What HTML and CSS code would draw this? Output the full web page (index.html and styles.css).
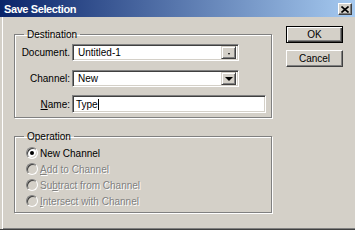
FILE: index.html
```html
<!DOCTYPE html>
<html lang="en">
<head>
    <meta charset="UTF-8">
    <title>Save Selection</title>
    <link rel="stylesheet" href="styles.css">
</head>
<body>
    <div class="window">
        <div class="titlebar">
            <span class="title">Save Selection</span>
            <button class="close">
                <svg width="8" height="7" viewBox="0 0 8 7"><path d="M0.5 0.5 L7.5 6.5 M7.5 0.5 L0.5 6.5" stroke="#000" stroke-width="1.6"/></svg>
            </button>
        </div>

        <div class="dialog">
            <div class="groups">
                <!-- Destination -->
                <fieldset class="group dest">
                    <legend>Destination</legend>
                    <div class="row">
                        <label>Document.</label>
                        <div class="select doc">
                            <span class="value">Untitled-1</span>
                            <span class="arrow tiny"></span>
                        </div>
                    </div>
                    <div class="row">
                        <label>Channel:</label>
                        <div class="select">
                            <span class="value">New</span>
                            <span class="arrow"></span>
                        </div>
                    </div>
                    <div class="row">
                        <label><u>N</u>ame:</label>
                        <div class="textbox"><span class="value">Type</span><span class="caret"></span></div>
                    </div>
                </fieldset>

                <!-- Operation -->
                <fieldset class="group op">
                    <legend>Operation</legend>
                    <div class="radio-row">
                        <span class="radio checked"></span>
                        <span class="radio-label">New Channel</span>
                    </div>
                    <div class="radio-row disabled">
                        <span class="radio"></span>
                        <span class="radio-label"><u>A</u>dd to Channel</span>
                    </div>
                    <div class="radio-row disabled">
                        <span class="radio"></span>
                        <span class="radio-label">Su<u>b</u>tract from Channel</span>
                    </div>
                    <div class="radio-row disabled">
                        <span class="radio"></span>
                        <span class="radio-label"><u>I</u>ntersect with Channel</span>
                    </div>
                </fieldset>
            </div>

            <div class="buttons">
                <button class="btn default">OK</button>
                <button class="btn">Cancel</button>
            </div>
        </div>
    </div>
</body>
</html>
```

FILE: styles.css
```css
body {
    margin: 0;
    background-color: #d4d0c8;
    font-family: "Liberation Sans", Arial, sans-serif;
    font-size: 10px;
    color: #000;
}
.window {
    width: 355px;
    height: 230px;
    box-sizing: border-box;
    background-color: #d4d0c8;
    border-bottom: 1px solid #404040;
    box-shadow: inset 0 -1px 0 #808080;
    overflow: hidden;
}
.titlebar {
    height: 17px;
    display: flex;
    align-items: center;
    justify-content: space-between;
    padding: 0 3px 0 4px;
    background: linear-gradient(to right, #0a246a, #a6caf0);
}
.title {
    color: #fff;
    font-weight: bold;
    font-size: 11px;
    letter-spacing: -0.4px;
}
.close {
    width: 14px;
    height: 12px;
    padding: 0;
    margin-top: 1px;
    display: flex;
    align-items: center;
    justify-content: center;
    background-color: #d4d0c8;
    border: 1px solid;
    border-color: #fff #404040 #404040 #fff;
    box-shadow: inset -1px -1px 0 #808080;
}
.dialog {
    display: flex;
    gap: 14px;
    height: 212px;
    padding-left: 14px;
    box-shadow: inset 2px 0 0 #d4d0c8, inset 3px 0 0 #fff;
}
.groups {
    width: 258px;
    padding-top: 11px;
}
.group {
    margin: 0;
    padding: 0;
    border: 1px solid #808080;
    box-shadow: 1px 1px 0 #fff, inset 1px 1px 0 #fff;
}
.group legend {
    margin-left: 9px;
    padding: 0 3px;
    line-height: 13px;
}
.dest {
    padding: 3px 0 4px 0;
}
.op {
    margin-top: 12px;
    padding: 2px 0 3px 0;
}
.row {
    display: flex;
    align-items: center;
    margin-top: 9px;
}
.row:first-of-type {
    margin-top: 0;
}
.row:last-child {
    margin-top: 8px;
}
.row label {
    width: 55px;
    margin-right: 2px;
    text-align: right;
}
.select,
.textbox {
    display: flex;
    align-items: center;
    box-sizing: border-box;
    background-color: #fff;
    border: 1px solid;
    border-color: #808080 #fff #fff #808080;
    box-shadow: inset 1px 1px 0 #404040, inset -1px -1px 0 #d4d0c8;
}
.select {
    width: 167px;
    height: 17px;
    padding: 2px 2px 2px 5px;
}
.select .value {
    flex: 1;
}
.textbox {
    width: 194px;
    height: 18px;
    padding: 0 2px 0 3px;
}
.caret {
    width: 1px;
    height: 11px;
    background-color: #000;
}
.arrow {
    width: 15px;
    height: 13px;
    box-sizing: border-box;
    display: flex;
    align-items: center;
    justify-content: center;
    background-color: #d4d0c8;
    border: 1px solid;
    border-color: #d4d0c8 #404040 #404040 #d4d0c8;
    box-shadow: inset 1px 1px 0 #fff, inset -1px -1px 0 #808080;
}
.arrow::after {
    content: "";
    border-left: 4px solid transparent;
    border-right: 4px solid transparent;
    border-top: 4px solid #000;
}
.arrow.tiny::after {
    border-left-width: 1px;
    border-right-width: 1px;
    border-top-width: 2px;
    margin-top: 3px;
}
.radio-row {
    display: flex;
    align-items: center;
    height: 16px;
    padding-left: 11px;
}
.radio {
    width: 12px;
    height: 12px;
    box-sizing: border-box;
    border-radius: 50%;
    display: flex;
    align-items: center;
    justify-content: center;
    background-color: #fff;
    border: 1px solid;
    border-color: #808080 #fff #fff #808080;
    box-shadow: inset 1px 1px 0 #404040, inset -1px -1px 0 #d4d0c8;
}
.radio.checked::after {
    content: "";
    width: 4px;
    height: 4px;
    border-radius: 50%;
    background-color: #000;
}
.radio-label {
    margin-left: 2px;
}
.disabled .radio {
    background-color: #d4d0c8;
}
.disabled .radio-label {
    color: #808080;
    text-shadow: 1px 1px 0 #fff;
}
.buttons {
    display: flex;
    flex-direction: column;
    gap: 7px;
    padding-top: 9px;
}
.btn {
    width: 57px;
    height: 17px;
    padding: 0;
    font-family: inherit;
    font-size: 10px;
    color: #000;
    background-color: #d4d0c8;
    border: 1px solid;
    border-color: #fff #404040 #404040 #fff;
    box-shadow: inset -1px -1px 0 #808080;
}
.btn.default {
    border-color: #000;
    box-shadow: inset 1px 1px 0 #fff, inset -1px -1px 0 #404040, inset -2px -2px 0 #808080;
}
```
